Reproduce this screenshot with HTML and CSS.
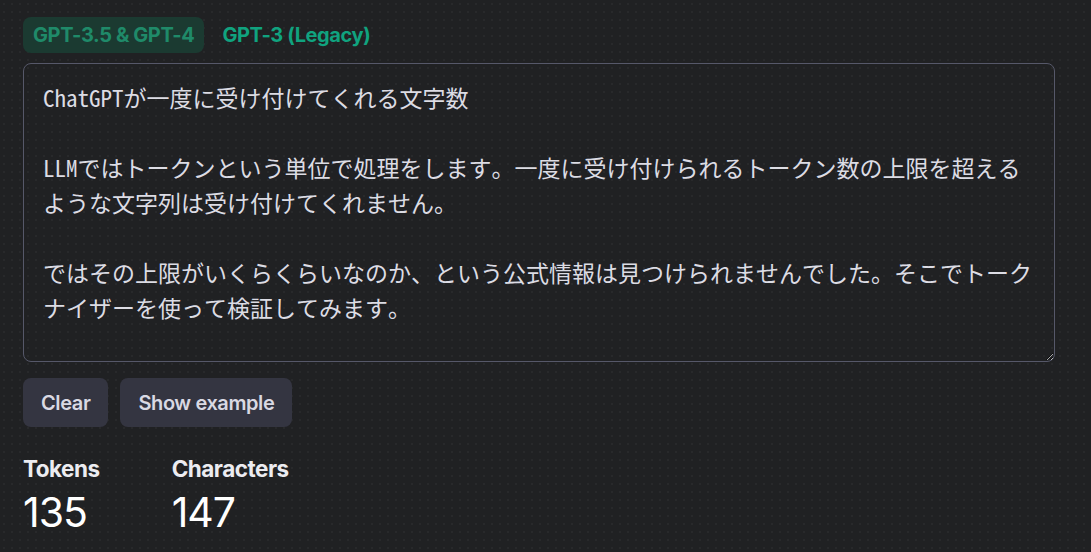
FILE: index.html
```html
<!DOCTYPE html>
<html lang="ja">
<head>
<meta charset="utf-8">
<title>Tokenizer</title>
<link rel="stylesheet" href="styles.css">
</head>
<body>
<main class="page">
  <nav class="tabs">
    <span class="tab tab-active">GPT-3.5 &amp; GPT-4</span>
    <span class="tab">GPT-3 (Legacy)</span>
  </nav>
  <textarea class="input" wrap="off" spellcheck="false">ChatGPTが一度に受け付けてくれる文字数

LLMではトークンという単位で処理をします。一度に受け付けられるトークン数の上限を超える
ような文字列は受け付けてくれません。

ではその上限がいくらくらいなのか、という公式情報は見つけられませんでした。そこでトーク
ナイザーを使って検証してみます。</textarea>
  <div class="actions">
    <button class="btn">Clear</button>
    <button class="btn">Show example</button>
  </div>
  <div class="stats">
    <div class="stat">
      <div class="stat-label">Tokens</div>
      <div class="stat-value">135</div>
    </div>
    <div class="stat">
      <div class="stat-label">Characters</div>
      <div class="stat-value">147</div>
    </div>
  </div>
</main>
</body>
</html>
```

FILE: styles.css
```css
html, body {
  margin: 0;
  padding: 0;
}
body {
  background-color: #202123;
  background-image: radial-gradient(rgba(255,255,255,0.035) 1px, transparent 1.2px);
  background-size: 8px 8px;
  color: #ececf1;
  font-family: Inter, "Liberation Sans", sans-serif;
  height: 552px;
  overflow: hidden;
}
.page {
  padding: 17px 36px 0 23px;
}
.tabs {
  display: flex;
  gap: 8px;
  height: 36px;
  align-items: center;
}
.tab {
  display: flex;
  align-items: center;
  height: 36px;
  padding: 0 10px;
  border-radius: 8px;
  font-size: 20px;
  font-weight: 700;
  letter-spacing: -0.4px;
  color: #10a37f;
}
.tab-active {
  background: #1b3a31;
  color: #1f8a69;
}
.input {
  display: block;
  box-sizing: border-box;
  width: 1032px;
  height: 299px;
  margin-top: 10px;
  padding: 16px 19px;
  background: transparent;
  border: 1px solid #565869;
  border-radius: 8px;
  color: #dcdce4;
  font-family: "Noto Sans Mono CJK JP", "DejaVu Sans Mono", "Noto Sans CJK JP", monospace;
  font-size: 23px;
  line-height: 35px;
  resize: vertical;
  overflow: hidden;
  outline: none;
}
.actions {
  display: flex;
  gap: 12px;
  margin-top: 16px;
}
.btn {
  height: 49px;
  padding: 0 18px;
  border: none;
  border-radius: 8px;
  background: #343541;
  color: #d9d9e3;
  font-family: Inter, "Liberation Sans", sans-serif;
  font-size: 20px;
  font-weight: 600;
  letter-spacing: -0.4px;
}
.stats {
  display: flex;
  gap: 72px;
  margin-top: 29px;
}
.stat-label {
  font-size: 22.5px;
  font-weight: 700;
  letter-spacing: -0.5px;
  line-height: 26px;
  color: #ececf1;
}
.stat-value {
  margin-top: 5px;
  font-size: 41px;
  font-weight: 400;
  letter-spacing: -1px;
  line-height: 50px;
  color: #ffffff;
}
```
